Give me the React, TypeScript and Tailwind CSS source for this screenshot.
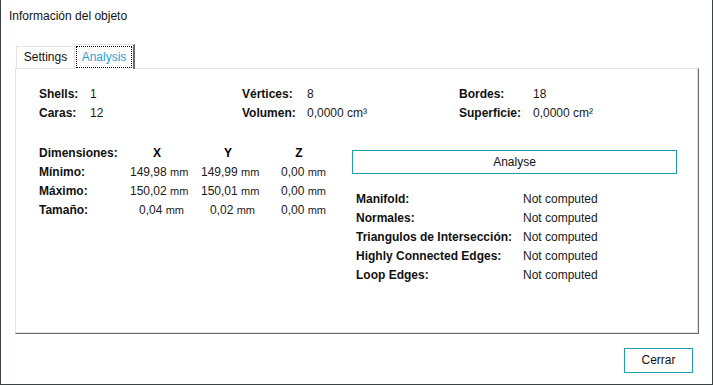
import React from 'react'

const font = { fontFamily: '"Liberation Sans", Arial, sans-serif' }

const summary = [
  ['Shells:', '1', 'Vértices:', '8', 'Bordes:', '18'],
  ['Caras:', '12', 'Volumen:', '0,0000 cm³', 'Superficie:', '0,0000 cm²'],
]

const dims = [
  ['Mínimo:', '149,98', '149,99', '0,00'],
  ['Máximo:', '150,02', '150,01', '0,00'],
  ['Tamaño:', '0,04', '0,02', '0,00'],
]

const checks = [
  'Manifold:',
  'Normales:',
  'Triangulos de Intersección:',
  'Highly Connected Edges:',
  'Loop Edges:',
]

function Mm({ value }: { value: string }) {
  return (
    <span className="text-right whitespace-nowrap text-[#1a1a1a]">
      {value} <span className="text-[11px]">mm</span>
    </span>
  )
}

export default function App() {
  return (
    <div
      style={font}
      className="w-[713px] h-[385px] bg-white border-x border-b border-[#3b4345] flex flex-col text-[12px] leading-[19px] text-black"
    >
      {/* Title */}
      <div className="h-[44px] pl-[8px] pt-[7px] text-[12px] leading-[18px] text-[#111]">
        Información del objeto
      </div>

      {/* Tabs */}
      <div className="flex items-end h-[24px] ml-[15px] relative z-10">
        <div className="w-[58px] h-[22px] border-t border-l border-[#e3e3e3] bg-white flex items-center justify-center text-[#111]">
          Settings
        </div>
        <div className="relative w-[61px] h-[25px] -mb-px border-t border-l border-[#e3e3e3] border-r-2 border-r-[#6b6b6b] bg-white flex items-center justify-center text-[#2a9fd6]">
          <span className="absolute left-[1px] top-[1px] right-[1px] bottom-[1px] border border-dotted border-black" />
          Analysis
        </div>
      </div>

      {/* Tab page */}
      <div className="ml-[14px] mr-[13px] h-[266px] border-t border-l border-[#e3e3e3] border-r border-b border-r-[#6b6b6b] border-b-[#6b6b6b] shadow-[inset_-1px_-1px_0_#e3e3e3] pt-[16px] pl-[23px]">
        <div className="grid grid-cols-[51px_152px_65px_152px_74px_1fr]">
          {summary.map((row) =>
            row.map((cell, i) => (
              <span
                key={row[0] + i}
                className={i % 2 === 0 ? 'font-bold text-[#111] whitespace-nowrap' : 'text-[#1a1a1a] whitespace-nowrap'}
              >
                {cell}
              </span>
            ))
          )}
        </div>

        <div className="flex mt-[21px]">
          {/* Dimensions */}
          <div className="w-[313px] grid grid-cols-[74px_54px_54px_54px] gap-x-[17px] content-start">
            <span className="font-bold text-[#111] whitespace-nowrap">Dimensiones:</span>
            <span className="font-bold text-center">X</span>
            <span className="font-bold text-center">Y</span>
            <span className="font-bold text-center">Z</span>
            {dims.map((d) => (
              <React.Fragment key={d[0]}>
                <span className="font-bold text-[#111]">{d[0]}</span>
                <Mm value={d[1]} />
                <Mm value={d[2]} />
                <Mm value={d[3]} />
              </React.Fragment>
            ))}
          </div>

          {/* Analysis */}
          <div className="w-[325px] pt-[6px]">
            <button className="w-full h-[24px] border border-[#1f9fb6] bg-white text-[12px] text-[#111]">
              Analyse
            </button>
            <div className="mt-[16px] pl-[4px] grid grid-cols-[167px_1fr]">
              {checks.map((c) => (
                <React.Fragment key={c}>
                  <span className="font-bold text-[#111] whitespace-nowrap">{c}</span>
                  <span className="text-[#1a1a1a]">Not computed</span>
                </React.Fragment>
              ))}
            </div>
          </div>
        </div>
      </div>

      {/* Footer */}
      <div className="flex justify-end pr-[19px] pt-[14px]">
        <button className="w-[69px] h-[25px] border border-[#1f9fb6] bg-white text-[12px] text-[#111]">
          Cerrar
        </button>
      </div>
    </div>
  )
}
